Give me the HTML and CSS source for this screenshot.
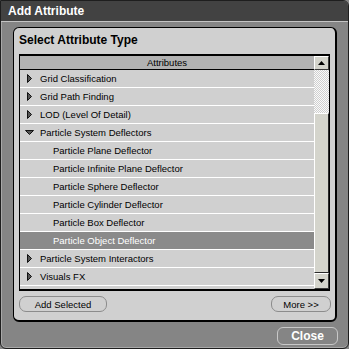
FILE: index.html
```html
<!DOCTYPE html>
<html lang="en">
<head>
    <meta charset="utf-8">
    <title>Add Attribute</title>
    <link rel="stylesheet" href="styles.css">
</head>
<body>
    <div class="window">
        <div class="titlebar">Add Attribute</div>
        <div class="panel">
            <h4>Select Attribute Type</h4>
            <div class="listbox">
                <div class="list">
                    <div class="head">Attributes</div>
                    <div class="row"><span class="tri"><svg width="5" height="9" viewBox="0 0 5 9"><path d="M0.5 0.5 L4.5 4.5 L0.5 8.5 Z" fill="#555" stroke="#111" stroke-width="1"/></svg></span>Grid Classification</div>
                    <div class="row"><span class="tri"><svg width="5" height="9" viewBox="0 0 5 9"><path d="M0.5 0.5 L4.5 4.5 L0.5 8.5 Z" fill="#555" stroke="#111" stroke-width="1"/></svg></span>Grid Path Finding</div>
                    <div class="row"><span class="tri"><svg width="5" height="9" viewBox="0 0 5 9"><path d="M0.5 0.5 L4.5 4.5 L0.5 8.5 Z" fill="#555" stroke="#111" stroke-width="1"/></svg></span>LOD (Level Of Detail)</div>
                    <div class="row"><span class="tri"><svg width="9" height="5" viewBox="0 0 9 5"><path d="M0.5 0.5 L8.5 0.5 L4.5 4.5 Z" fill="#555" stroke="#111" stroke-width="1"/></svg></span>Particle System Deflectors</div>
                    <div class="row child">Particle Plane Deflector</div>
                    <div class="row child">Particle Infinite Plane Deflector</div>
                    <div class="row child">Particle Sphere Deflector</div>
                    <div class="row child">Particle Cylinder Deflector</div>
                    <div class="row child">Particle Box Deflector</div>
                    <div class="row child selected">Particle Object Deflector</div>
                    <div class="row"><span class="tri"><svg width="5" height="9" viewBox="0 0 5 9"><path d="M0.5 0.5 L4.5 4.5 L0.5 8.5 Z" fill="#555" stroke="#111" stroke-width="1"/></svg></span>Particle System Interactors</div>
                    <div class="row"><span class="tri"><svg width="5" height="9" viewBox="0 0 5 9"><path d="M0.5 0.5 L4.5 4.5 L0.5 8.5 Z" fill="#555" stroke="#111" stroke-width="1"/></svg></span>Visuals FX</div>
                </div>
                <div class="scrollbar">
                    <div class="sbtn up"><svg width="7" height="4" viewBox="0 0 7 4"><path d="M3.5 0 L7 4 L0 4 Z" fill="#000"/></svg></div>
                    <div class="track"></div>
                    <div class="thumb"></div>
                    <div class="sbtn down"><svg width="7" height="4" viewBox="0 0 7 4"><path d="M0 0 L7 0 L3.5 4 Z" fill="#000"/></svg></div>
                </div>
            </div>
            <div class="actions">
                <button type="button" class="pill add">Add Selected</button>
                <button type="button" class="pill more">More &gt;&gt;</button>
            </div>
        </div>
        <div class="footer">
            <button type="button" class="close">Close</button>
        </div>
    </div>
</body>
</html>
```

FILE: styles.css
```css
* {
    margin: 0;
    padding: 0;
    box-sizing: border-box;
}
body {
    width: 349px;
    height: 349px;
    background: #858585;
    font-family: "Liberation Sans", Arial, sans-serif;
    overflow: hidden;
}
.window {
    width: 349px;
    height: 349px;
    border: 1px solid #1e1e1e;
    border-radius: 0 6px 6px 6px;
    background: #858585;
    box-shadow: inset 1px 0 0 #a8a8a8, inset 0 -1px 0 #a8a8a8;
    display: flex;
    flex-direction: column;
    overflow: hidden;
}
.titlebar {
    height: 21px;
    line-height: 20px;
    padding-left: 7px;
    background: #424242;
    border-bottom: 1px solid #c4c4c4;
    color: #fff;
    font-size: 12px;
    font-weight: bold;
}
.panel {
    margin: 5px 11px 0 12px;
    height: 295px;
    background: #d0d0d0;
    border: 1px solid #000;
    border-right-width: 2px;
    border-bottom-width: 2px;
    border-radius: 6px;
    padding: 0 5px 8px 5px;
    display: flex;
    flex-direction: column;
}
.panel h4 {
    height: 26px;
    line-height: 24px;
    font-size: 12px;
    font-weight: bold;
    color: #000;
}
.listbox {
    height: 237px;
    border: 1px solid #000;
    border-top-width: 2px;
    border-bottom-width: 2px;
    display: flex;
}
.list {
    width: 294px;
    display: flex;
    flex-direction: column;
}
.head {
    height: 14px;
    line-height: 13px;
    background: #b2b2b2;
    border-bottom: 1px solid #000;
    text-align: center;
    font-size: 9.5px;
    color: #000;
}
.row {
    height: 18px;
    line-height: 17px;
    border-bottom: 1px solid #fff;
    padding-left: 2px;
    font-size: 9.5px;
    color: #000;
    display: flex;
    align-items: center;
    white-space: nowrap;
}
.row .tri {
    width: 15px;
    margin-right: 3px;
    display: flex;
    justify-content: center;
    align-items: center;
}
.row.child {
    padding-left: 33px;
}
.row.selected {
    background: #8a8a8a;
    color: #fff;
}
.scrollbar {
    width: 15px;
    display: flex;
    flex-direction: column;
}
.sbtn {
    background: #d4d4cc;
    border: 1px solid #3a3a3a;
    border-top-color: #fff;
    border-left-color: #fff;
    display: flex;
    justify-content: center;
    align-items: center;
}
.sbtn.up {
    height: 14px;
}
.sbtn.down {
    height: 16px;
}
.track {
    height: 43px;
    background: repeating-conic-gradient(#fafafa 0 25%, #cfcfcf 0 50%) 0 0 / 2px 2px;
}
.thumb {
    height: 160px;
    background: #d4d4cc;
    border: 1px solid #2a2a2a;
    border-top-color: #fff;
    border-left-color: #fff;
}
.actions {
    margin-top: 5px;
    margin-right: -1px;
    display: flex;
    justify-content: space-between;
}
.pill {
    height: 16px;
    border: 1px solid #8c8c8c;
    border-radius: 7px;
    background: #d0d0d0;
    font-family: "Liberation Sans", Arial, sans-serif;
    font-size: 9.5px;
    color: #000;
}
.pill.add {
    width: 88px;
}
.pill.more {
    width: 60px;
}
.footer {
    margin: 5px 10px 0 0;
    display: flex;
    justify-content: flex-end;
}
.close {
    width: 61px;
    height: 18px;
    border: 1px solid #c8c8c8;
    border-radius: 6px;
    background: #858585;
    color: #fff;
    font-family: "Liberation Sans", Arial, sans-serif;
    font-size: 12px;
    font-weight: bold;
}
```
